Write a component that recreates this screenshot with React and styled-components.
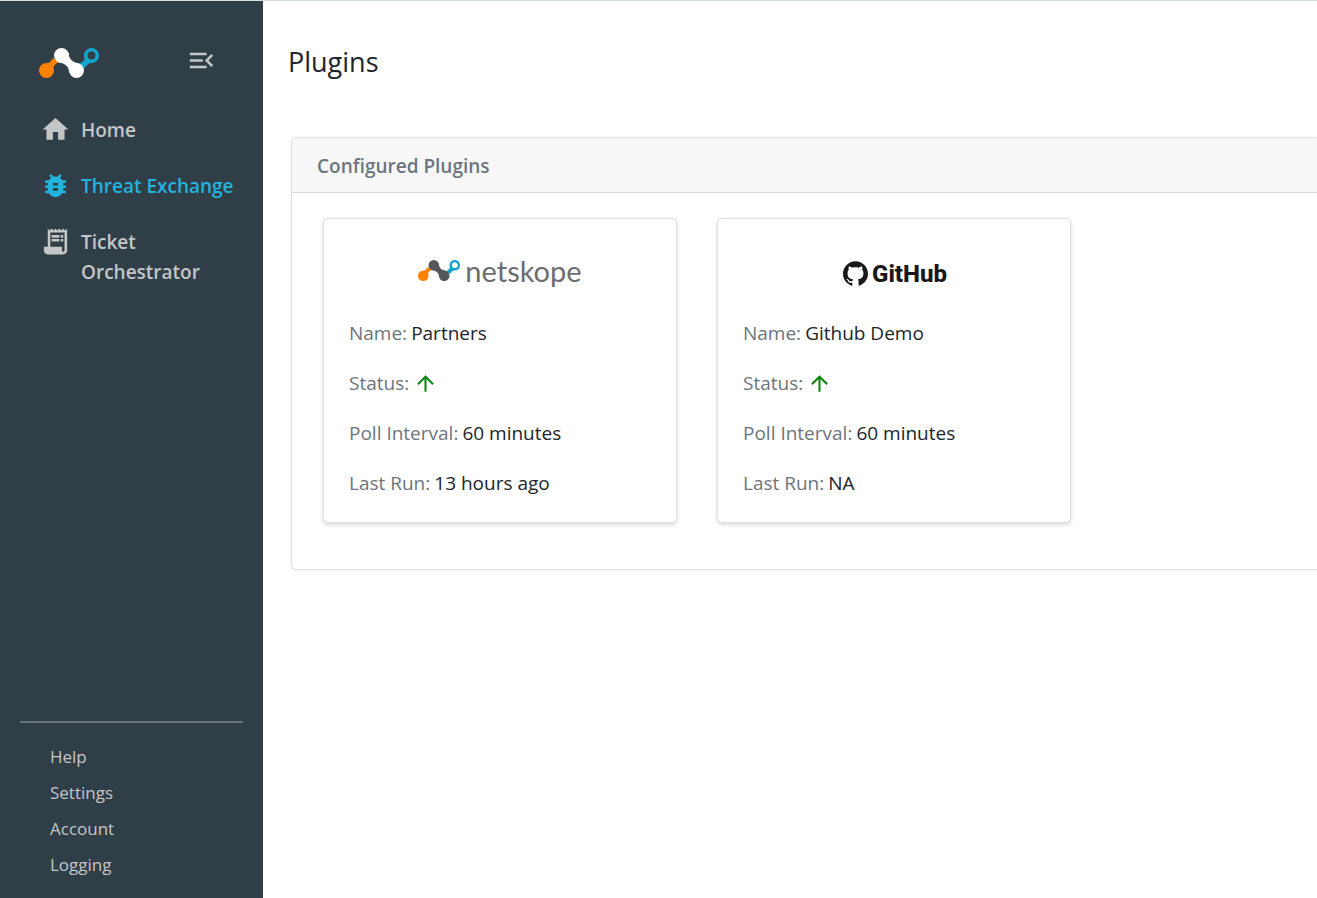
import React from "react";
import styled, { createGlobalStyle } from "styled-components";
import { MdMenuOpen, MdHome, MdBugReport, MdReceiptLong, MdArrowUpward } from "react-icons/md";

const GlobalStyle = createGlobalStyle`
  *, *::before, *::after { box-sizing: border-box; }
  body {
    margin: 0;
    background: #ffffff;
    color: #212529;
    font-family: "Segoe UI", "Open Sans", "Noto Sans", sans-serif;
    font-size: 19px;
    line-height: 30px;
  }
`;

const Page = styled.div`
  display: flex;
  min-height: 100vh;
  border-top: 1px solid #d6dfe1;
`;

const Sidebar = styled.aside`
  flex: 0 0 263px;
  display: flex;
  flex-direction: column;
  background: #303e48;
  color: #c4c6c8;
`;

const SidebarTop = styled.header`
  display: flex;
  align-items: center;
  justify-content: space-between;
  height: 101px;
  padding: 22px 46px 0 39px;
`;

const ToggleButton = styled.button`
  display: flex;
  margin-top: -4px;
  padding: 0;
  border: 0;
  background: none;
  color: inherit;
  font-size: 31px;
  cursor: pointer;
`;

const Nav = styled.nav`
  display: flex;
  flex-direction: column;
`;

const NavLink = styled.a`
  display: flex;
  align-items: flex-start;
  gap: 10px;
  padding: 13px 28px 13px 40px;
  color: ${(p) => (p.$active ? "#24b3dc" : "inherit")};
  font-weight: 600;
  text-decoration: none;

  svg {
    flex: none;
    margin-top: -1px;
    font-size: 31px;
  }
`;

const SidebarFooter = styled.nav`
  display: flex;
  flex-direction: column;
  margin: auto 20px 0;
  padding: 16px 30px 15px;
  border-top: 2px solid #68747b;
`;

const FooterLink = styled.a`
  color: inherit;
  font-size: 17px;
  line-height: 36px;
  text-decoration: none;
`;

const Main = styled.main`
  flex: 1;
  min-width: 0;
  padding: 41px 0 40px 25px;
`;

const Title = styled.h1`
  margin: 0 0 55px;
  font-size: 27px;
  font-weight: 400;
  line-height: 40px;
`;

const Panel = styled.section`
  margin-left: 3px;
  border: 1px solid #dcdddf;
  border-right: 0;
  border-radius: 5px 0 0 5px;
  box-shadow: 0 1px 3px rgba(0, 0, 0, 0.06);
`;

const PanelTitle = styled.h2`
  margin: 0;
  padding: 13px 25px 11px;
  border-bottom: 1px solid #d8d9da;
  border-radius: 4px 0 0 0;
  background: #f7f7f7;
  color: #6c757d;
  font-size: 19px;
  font-weight: 600;
  line-height: 30px;
`;

const Cards = styled.div`
  display: flex;
  flex-wrap: wrap;
  gap: 40px;
  padding: 25px 31px 46px;
`;

const Card = styled.article`
  flex: 0 1 354px;
  padding: 0 25px 24px;
  border: 1px solid #dedfe0;
  border-radius: 5px;
  background: #ffffff;
  box-shadow: 0 2px 4px rgba(0, 0, 0, 0.15);
`;

const CardLogo = styled.div`
  display: flex;
  align-items: center;
  justify-content: center;
  height: 99px;
  padding-top: 4px;
`;

const NetskopeBrand = styled.div`
  display: flex;
  align-items: center;
  gap: 5px;
  color: #6c6d70;
  font-family: Lato, sans-serif;
  font-size: 29px;
`;

const GithubBrand = styled.div`
  display: flex;
  align-items: center;
  gap: 4px;
  padding: 6px 0 0 2px;
  color: #191717;
  font-family: Roboto, sans-serif;
  font-size: 24px;
  font-weight: 800;
`;

const Details = styled.dl`
  display: flex;
  flex-direction: column;
  gap: 20px;
  margin: 0;
`;

const Detail = styled.div`
  display: flex;
  gap: 4px;
`;

const Label = styled.dt`
  color: #6c757d;
`;

const Value = styled.dd`
  display: flex;
  align-items: center;
  margin: 0;
`;

const StatusUp = styled(MdArrowUpward)`
  color: #0d860d;
  font-size: 25px;
`;

function NetskopeMark({ width, color }) {
  return (
    <svg width={width} height={width / 2} viewBox="0 0 60 30" aria-hidden="true">
      <path d="M4 16.500Q11 16 14 10L20 14Q13 17 13 25Z" fill="#ff8300" />
      <circle cx="7.500" cy="22.500" r="7.500" fill="#ff8300" />
      <path d="M56 13.500Q49 14 46 20L40 16Q47 13 47 5Z" fill="#14a5cd" />
      <circle cx="52.500" cy="7.500" r="5.700" fill="#303e48" fillOpacity="0" stroke="#14a5cd" strokeWidth="3.700" />
      <circle cx="52.500" cy="7.500" r="3.900" fill={color === "#ffffff" ? "#303e48" : "#ffffff"} />
      <path d="M29.500 5Q30 14 40 15.700L35 25Q30 25 30 23Q29 16 20 14.300Z" fill={color} />
      <circle cx="22.500" cy="7.500" r="7.500" fill={color} />
      <circle cx="37.500" cy="22.500" r="7.500" fill={color} />
    </svg>
  );
}

function GithubMark() {
  return (
    <svg width="25" height="25" viewBox="0 0 24 24" fill="currentColor" aria-hidden="true">
      <path d="M12 .297c-6.630 0-12 5.373-12 12 0 5.303 3.438 9.800 8.205 11.385.6.113.82-.258.82-.577 0-.285-.01-1.040-.015-2.040-3.338.724-4.042-1.610-4.042-1.610C4.422 18.070 3.633 17.700 3.633 17.700c-1.087-.744.084-.729.084-.729 1.205.084 1.838 1.236 1.838 1.236 1.070 1.835 2.809 1.305 3.495.998.108-.776.417-1.305.76-1.605-2.665-.3-5.466-1.332-5.466-5.930 0-1.310.465-2.380 1.235-3.220-.135-.303-.54-1.523.105-3.176 0 0 1.005-.322 3.300 1.230.96-.267 1.980-.399 3-.405 1.020.006 2.040.138 3 .405 2.280-1.552 3.285-1.230 3.285-1.230.645 1.653.24 2.873.12 3.176.765.84 1.230 1.910 1.230 3.220 0 4.610-2.805 5.625-5.475 5.920.42.36.81 1.096.81 2.220 0 1.606-.015 2.896-.015 3.286 0 .315.21.69.825.57C20.565 22.092 24 17.592 24 12.297c0-6.627-5.373-12-12-12" />
    </svg>
  );
}

const brands = {
  netskope: (
    <NetskopeBrand>
      <NetskopeMark width={42} color="#54565b" />
      <span>netskope</span>
    </NetskopeBrand>
  ),
  github: (
    <GithubBrand>
      <GithubMark />
      <span>GitHub</span>
    </GithubBrand>
  ),
};

const navItems = [
  { label: "Home", Icon: MdHome },
  { label: "Threat Exchange", Icon: MdBugReport, active: true },
  { label: "Ticket Orchestrator", Icon: MdReceiptLong },
];

const footerItems = ["Help", "Settings", "Account", "Logging"];

const plugins = [
  { brand: "netskope", name: "Partners", interval: "60 minutes", lastRun: "13 hours ago" },
  { brand: "github", name: "Github Demo", interval: "60 minutes", lastRun: "NA" },
];

function PluginCard({ plugin }) {
  return (
    <Card>
      <CardLogo>{brands[plugin.brand]}</CardLogo>
      <Details>
        <Detail>
          <Label>Name:</Label>
          <Value>{plugin.name}</Value>
        </Detail>
        <Detail>
          <Label>Status:</Label>
          <Value><StatusUp role="img" aria-label="Up" /></Value>
        </Detail>
        <Detail>
          <Label>Poll Interval:</Label>
          <Value>{plugin.interval}</Value>
        </Detail>
        <Detail>
          <Label>Last Run:</Label>
          <Value>{plugin.lastRun}</Value>
        </Detail>
      </Details>
    </Card>
  );
}

export default function App() {
  return (
    <>
      <GlobalStyle />
      <Page>
        <Sidebar>
          <SidebarTop>
            <NetskopeMark width={60} color="#ffffff" />
            <ToggleButton type="button" aria-label="Collapse menu">
              <MdMenuOpen />
            </ToggleButton>
          </SidebarTop>
          <Nav aria-label="Main">
            {navItems.map(({ label, Icon, active }) => (
              <NavLink key={label} href="#" $active={active} aria-current={active ? "page" : undefined}>
                <Icon aria-hidden="true" />
                <span>{label}</span>
              </NavLink>
            ))}
          </Nav>
          <SidebarFooter aria-label="Secondary">
            {footerItems.map((label) => (
              <FooterLink key={label} href="#">{label}</FooterLink>
            ))}
          </SidebarFooter>
        </Sidebar>
        <Main>
          <Title>Plugins</Title>
          <Panel>
            <PanelTitle>Configured Plugins</PanelTitle>
            <Cards>
              {plugins.map((plugin) => (
                <PluginCard key={plugin.name} plugin={plugin} />
              ))}
            </Cards>
          </Panel>
        </Main>
      </Page>
    </>
  );
}
